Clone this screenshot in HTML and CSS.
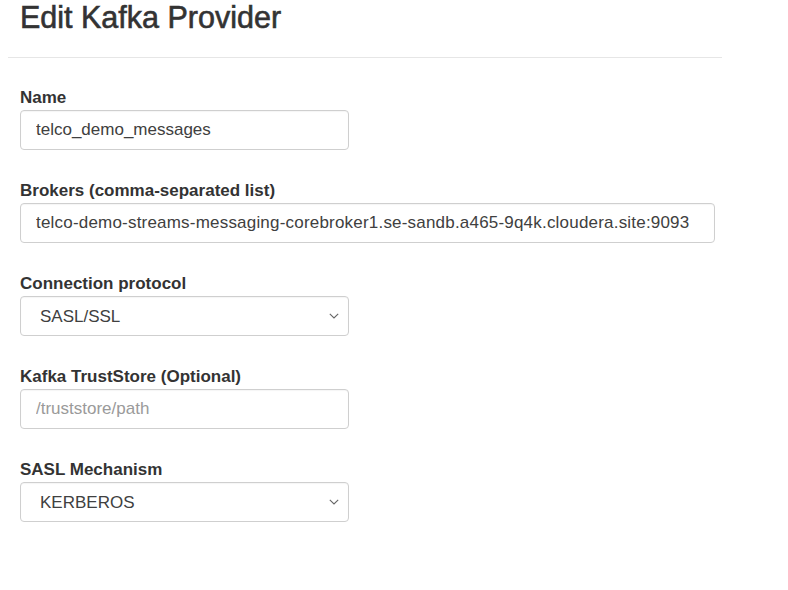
FILE: index.html
```html
<!DOCTYPE html>
<html>
<head>
<meta charset="utf-8">
<title>Edit Kafka Provider</title>
<link rel="stylesheet" href="styles.css">
</head>
<body>
<div class="page">
  <h1 class="title">Edit Kafka Provider</h1>
  <hr class="rule">
  <form class="form">
    <div class="group">
      <label class="label">Name</label>
      <input class="control short" type="text" value="telco_demo_messages">
    </div>
    <div class="group">
      <label class="label">Brokers (comma-separated list)</label>
      <input class="control wide" type="text" value="telco-demo-streams-messaging-corebroker1.se-sandb.a465-9q4k.cloudera.site:9093">
    </div>
    <div class="group">
      <label class="label">Connection protocol</label>
      <div class="select-wrap">
        <select class="control short select">
          <option>SASL/SSL</option>
        </select>
        <svg class="chev" width="10" height="6" viewBox="0 0 10 6"><path d="M0.8 0.8 L5 5 L9.2 0.8" fill="none" stroke="#666" stroke-width="1.1"/></svg>
      </div>
    </div>
    <div class="group">
      <label class="label">Kafka TrustStore (Optional)</label>
      <input class="control short" type="text" placeholder="/truststore/path">
    </div>
    <div class="group">
      <label class="label">SASL Mechanism</label>
      <div class="select-wrap">
        <select class="control short select">
          <option>KERBEROS</option>
        </select>
        <svg class="chev" width="10" height="6" viewBox="0 0 10 6"><path d="M0.8 0.8 L5 5 L9.2 0.8" fill="none" stroke="#666" stroke-width="1.1"/></svg>
      </div>
    </div>
  </form>
</div>
</body>
</html>
```
FILE: styles.css
```css
html, body {
  margin: 0;
  padding: 0;
  background: #fff;
}
body {
  font-family: "Liberation Sans", Arial, sans-serif;
  color: #333;
}
.page {
  width: 714px;
  margin-left: 8px;
}
.title {
  margin: 0;
  padding-left: 12px;
  font-size: 30.5px;
  line-height: 34px;
  font-weight: normal;
  color: #333;
  -webkit-text-stroke: 0.6px #333;
}
.rule {
  margin: 23px 0 0 0;
  border: 0;
  border-top: 1px solid #e6e6e6;
  height: 0;
}
.form {
  padding: 30px 12px 0 12px;
  display: flex;
  flex-direction: column;
}
.group {
  display: flex;
  flex-direction: column;
  align-items: flex-start;
  margin-bottom: 31px;
}
.label {
  font-size: 17px;
  line-height: 20px;
  font-weight: bold;
  color: #333;
  margin-bottom: 2px;
}
.control {
  box-sizing: border-box;
  height: 40px;
  margin: 0;
  border: 1px solid #cfcfcf;
  border-radius: 4px;
  background: #fff;
  font-family: "Liberation Sans", Arial, sans-serif;
  font-size: 17px;
  color: #404040;
  padding: 0 15px;
  outline: none;
  box-shadow: inset 0 1px 1px rgba(0,0,0,0.04);
}
.control::placeholder {
  color: #9a9a9a;
}
.short {
  width: 329px;
}
.wide {
  width: 695px;
  letter-spacing: 0.2px;
}
.select-wrap {
  position: relative;
}
.select {
  -webkit-appearance: none;
  appearance: none;
  padding-left: 19px;
}
.chev {
  position: absolute;
  right: 10px;
  top: 17px;
}
```
